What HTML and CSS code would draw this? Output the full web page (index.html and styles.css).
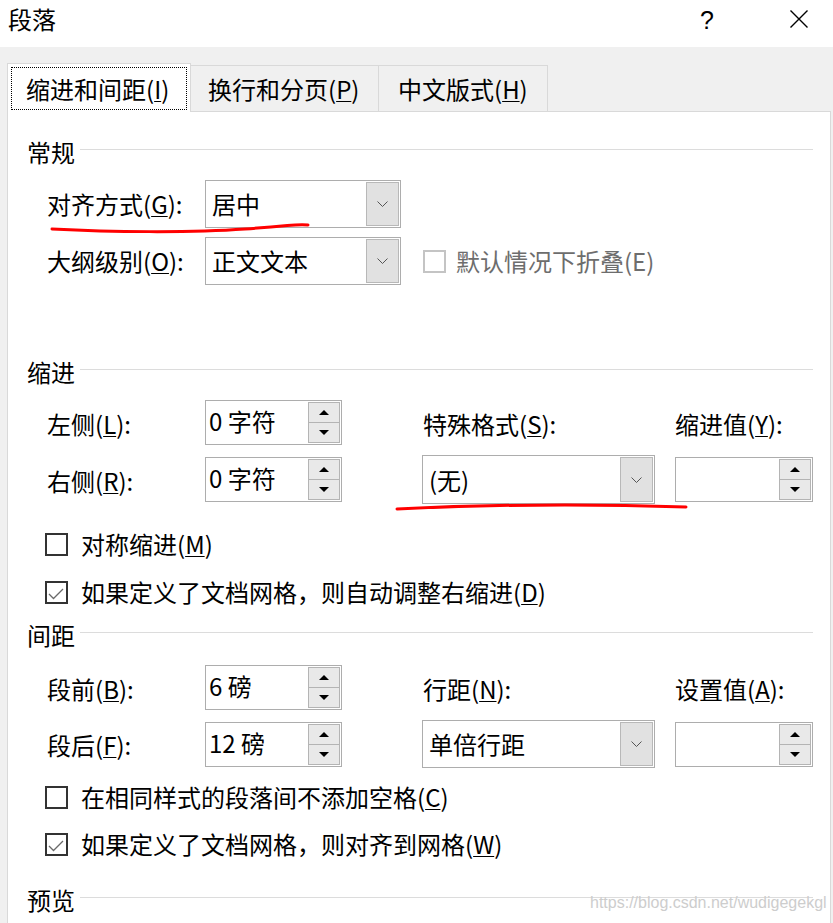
FILE: index.html
```html
<!DOCTYPE html>
<html lang="zh-CN">
<head>
<meta charset="utf-8">
<title>段落</title>
<link rel="stylesheet" href="styles.css">
</head>
<body>
<div class="dialog">
  <div class="titlebar">
    <span class="title">段落</span>
    <span class="help">?</span>
    <svg class="close" width="18" height="18" viewBox="0 0 18 18"><path d="M0.5 0.5 L17.5 17.5 M17.5 0.5 L0.5 17.5" stroke="#000" stroke-width="1.4" fill="none"/></svg>
  </div>
  <div class="tabbody">
    <div class="tabs">
      <div class="tab active tab-1"><span class="focus">缩进和间距(<u>I</u>)</span></div>
      <div class="tab tab-2">换行和分页(<u>P</u>)</div>
      <div class="tab tab-3">中文版式(<u>H</u>)</div>
    </div>
    <div class="panel">
      <div class="gtitle t-general">常规</div>
      <div class="grid g-general">
        <span class="lbl">对齐方式(<u>G</u>):</span>
        <div class="combo w-combo-a"><span class="val">居中</span><span class="drop"><svg width="11" height="6" viewBox="0 0 11 6"><polyline points="0.5,0.5 5.5,5.5 10.5,0.5" fill="none" stroke="#555" stroke-width="1"/></svg></span></div>
        <span></span><span></span>
        <span class="lbl">大纲级别(<u>O</u>):</span>
        <div class="combo w-combo-a"><span class="val">正文文本</span><span class="drop"><svg width="11" height="6" viewBox="0 0 11 6"><polyline points="0.5,0.5 5.5,5.5 10.5,0.5" fill="none" stroke="#555" stroke-width="1"/></svg></span></div>
        <div class="check disabled in-grid"><span class="box"></span>默认情况下折叠(E)</div>
        <span></span>
      </div>

      <div class="gtitle t-indent">缩进</div>
      <div class="grid g-indent">
        <span class="lbl lbl-spin">左侧(<u>L</u>):</span>
        <div class="spin w-spin"><span class="val">0 字符</span><span class="btns"><span class="btn up"></span><span class="btn down"></span></span></div>
        <span class="lbl lbl-spin">特殊格式(<u>S</u>):</span>
        <span class="lbl lbl-spin">缩进值(<u>Y</u>):</span>
        <span class="lbl lbl-spin">右侧(<u>R</u>):</span>
        <div class="spin w-spin"><span class="val">0 字符</span><span class="btns"><span class="btn up"></span><span class="btn down"></span></span></div>
        <div class="combo w-combo-b tall"><span class="val">(无)</span><span class="drop"><svg width="11" height="6" viewBox="0 0 11 6"><polyline points="0.5,0.5 5.5,5.5 10.5,0.5" fill="none" stroke="#555" stroke-width="1"/></svg></span></div>
        <div class="spin w-spin-b"><span class="val"></span><span class="btns"><span class="btn up"></span><span class="btn down"></span></span></div>
      </div>
      <div class="check c-1"><span class="box"></span>对称缩进(<u>M</u>)</div>
      <div class="check c-2"><span class="box"><svg width="19" height="19" viewBox="0 0 19 19"><polyline points="2,11 6.5,15.5 16,6" fill="none" stroke="#6a6a6a" stroke-width="1.3"/></svg></span>如果定义了文档网格，则自动调整右缩进(<u>D</u>)</div>

      <div class="gtitle t-spacing">间距</div>
      <div class="grid g-spacing">
        <span class="lbl lbl-spin">段前(<u>B</u>):</span>
        <div class="spin w-spin"><span class="val">6 磅</span><span class="btns"><span class="btn up"></span><span class="btn down"></span></span></div>
        <span class="lbl lbl-spin">行距(<u>N</u>):</span>
        <span class="lbl lbl-spin">设置值(<u>A</u>):</span>
        <span class="lbl lbl-spin">段后(<u>F</u>):</span>
        <div class="spin w-spin"><span class="val">12 磅</span><span class="btns"><span class="btn up"></span><span class="btn down"></span></span></div>
        <div class="combo w-combo-b"><span class="val">单倍行距</span><span class="drop"><svg width="11" height="6" viewBox="0 0 11 6"><polyline points="0.5,0.5 5.5,5.5 10.5,0.5" fill="none" stroke="#555" stroke-width="1"/></svg></span></div>
        <div class="spin w-spin-b"><span class="val"></span><span class="btns"><span class="btn up"></span><span class="btn down"></span></span></div>
      </div>
      <div class="check c-3"><span class="box"></span>在相同样式的段落间不添加空格(<u>C</u>)</div>
      <div class="check c-4"><span class="box"><svg width="19" height="19" viewBox="0 0 19 19"><polyline points="2,11 6.5,15.5 16,6" fill="none" stroke="#6a6a6a" stroke-width="1.3"/></svg></span>如果定义了文档网格，则对齐到网格(<u>W</u>)</div>

      <div class="gtitle t-preview">预览</div>
    </div>
  </div>
  <svg class="marks" width="833" height="923" viewBox="0 0 833 923">
    <path d="M52 229 C 110 232, 190 233, 245 229 S 295 224, 308 225" fill="none" stroke="#f00" stroke-width="3" stroke-linecap="round"/>
    <path d="M397 509 Q 540 502, 686 507" fill="none" stroke="#f00" stroke-width="3" stroke-linecap="round"/>
  </svg>
  <div class="watermark">https://blog.csdn.net/wudigegekgl</div>
</div>
</body>
</html>
```

FILE: styles.css
```css
* { box-sizing: border-box; }
html, body { margin: 0; padding: 0; }
body {
  width: 833px;
  height: 923px;
  overflow: hidden;
  background: #fff;
  color: #000;
  font-family: "Noto Sans CJK SC", "Noto Sans", sans-serif;
  font-size: 24px;
}
u { text-decoration-thickness: 1px; text-underline-offset: 2px; }

.dialog {
  position: relative;
  width: 833px;
  height: 923px;
  display: flex;
  flex-direction: column;
}

/* title bar */
.titlebar {
  height: 47px;
  flex: none;
  display: flex;
  align-items: center;
  padding-left: 8px;
  background: #fff;
}
.title { line-height: 32px; margin-bottom: 10px; }
.help {
  margin-left: auto;
  font-family: "Liberation Sans", Arial, sans-serif;
  font-size: 25px;
  line-height: 28px;
  margin-bottom: 8px;
}
.close { margin-left: 76px; margin-right: 25px; margin-bottom: 9px; }

/* tabs */
.tabbody {
  flex: 1;
  display: flex;
  flex-direction: column;
  background: #f0f0f0;
  padding: 16px 2px 0 7px;
}
.tabs {
  height: 49px;
  flex: none;
  display: flex;
  align-items: flex-end;
  margin-bottom: -1px;
  position: relative;
  z-index: 1;
}
.tab {
  height: 46px;
  margin-bottom: 1px;
  margin-left: -1px;
  border: 1px solid #d9d9d9;
  border-bottom: none;
  background: #f0f0f0;
  display: flex;
  align-items: center;
  line-height: 32px;
  white-space: nowrap;
}
.tab.active {
  height: 49px;
  margin: 0;
  background: #fff;
  padding: 3px 3px 2px 3px;
  align-items: stretch;
  position: relative;
  z-index: 2;
}
.focus {
  flex: 1;
  border: 1px dotted #000;
  display: flex;
  align-items: center;
  padding-left: 14px;
}
.tab-1 { width: 184px; }
.tab-2 { width: 189px; padding-left: 17px; }
.tab-3 { width: 170px; padding-left: 19px; }

/* panel */
.panel {
  flex: 1;
  background: #fff;
  border: 1px solid #d9d9d9;
  border-bottom: none;
}

.gtitle {
  display: flex;
  align-items: center;
  height: 32px;
  line-height: 32px;
  margin: 0 17px 0 19px;
  white-space: nowrap;
}
.gtitle::after {
  content: "";
  flex: 1;
  height: 1px;
  background: #dcdcdc;
  margin-left: 5px;
  margin-bottom: 5px;
}
.t-general { margin-top: 24px; }
.t-indent { margin-top: 71px; }
.t-spacing { margin-top: 11px; }
.t-preview { margin-top: 24px; }

.grid {
  display: grid;
  grid-template-columns: 158px 218px 252px 1fr;
  align-items: center;
  margin: 0 17px 0 39px;
}
.g-general { grid-template-rows: 48px 48px; row-gap: 9px; margin-top: 12px; }
.g-indent { grid-template-rows: 45px 49px; row-gap: 10px; margin-top: 12px; }
.g-spacing { grid-template-rows: 45px 48px; row-gap: 10px; margin-top: 14px; }

.lbl { line-height: 32px; white-space: nowrap; }
.lbl-spin { padding-top: 2px; }

/* combo box */
.combo {
  height: 48px;
  border: 1px solid #adadad;
  padding: 1px;
  display: flex;
  background: #fff;
}
.combo.tall { height: 49px; }
.combo .val {
  flex: 1;
  display: flex;
  align-items: center;
  padding-left: 5px;
  line-height: 32px;
  white-space: nowrap;
}
.combo .drop {
  width: 33px;
  flex: none;
  background: #e1e1e1;
  border: 1px solid #b8b8b8;
  display: flex;
  align-items: center;
  justify-content: center;
}
.w-combo-a { width: 196px; }
.w-combo-b { width: 233px; margin-left: -1px; }

/* spin box */
.spin {
  height: 45px;
  border: 1px solid #adadad;
  padding: 1px;
  display: flex;
  background: #fff;
}
.spin .val {
  flex: 1;
  display: flex;
  align-items: center;
  padding-left: 2px;
  padding-bottom: 3px;
  line-height: 32px;
  white-space: nowrap;
}
.spin .btns {
  width: 32px;
  flex: none;
  display: flex;
  flex-direction: column;
}
.spin .btn {
  flex: 1;
  border: 1px solid #b4b4b4;
  background: #e9e9e9;
  display: flex;
  align-items: center;
  justify-content: center;
}
.spin .btn.down { border-top: none; }
.spin .btn.up::before {
  content: "";
  border-left: 5px solid transparent;
  border-right: 5px solid transparent;
  border-bottom: 5px solid #000;
}
.spin .btn.down::before {
  content: "";
  border-left: 5px solid transparent;
  border-right: 5px solid transparent;
  border-top: 5px solid #000;
}
.w-spin { width: 137px; }
.w-spin-b { width: 138px; }

/* checkboxes */
.check {
  display: flex;
  align-items: center;
  height: 32px;
  line-height: 32px;
  margin-left: 37px;
  white-space: nowrap;
}
.check .box {
  width: 23px;
  height: 23px;
  flex: none;
  border: 2px solid #333;
  background: #fff;
  margin-right: 13px;
  display: flex;
}
.check.in-grid { margin-left: 0; }
.check.disabled { color: #6d6d6d; }
.check.disabled .box { border-color: #c4c4c4; margin-right: 10px; }
.c-1 { margin-top: 24px; }
.c-2 { margin-top: 16px; }
.c-3 { margin-top: 13px; }
.c-4 { margin-top: 15px; }

/* overlays */
.marks {
  position: absolute;
  left: 0;
  top: 0;
  pointer-events: none;
  z-index: 5;
}
.watermark {
  position: absolute;
  left: 590px;
  top: 894px;
  font-family: "Liberation Sans", Arial, sans-serif;
  font-size: 16px;
  line-height: 18px;
  color: #cdcdcd;
  z-index: 5;
  white-space: nowrap;
}
```
